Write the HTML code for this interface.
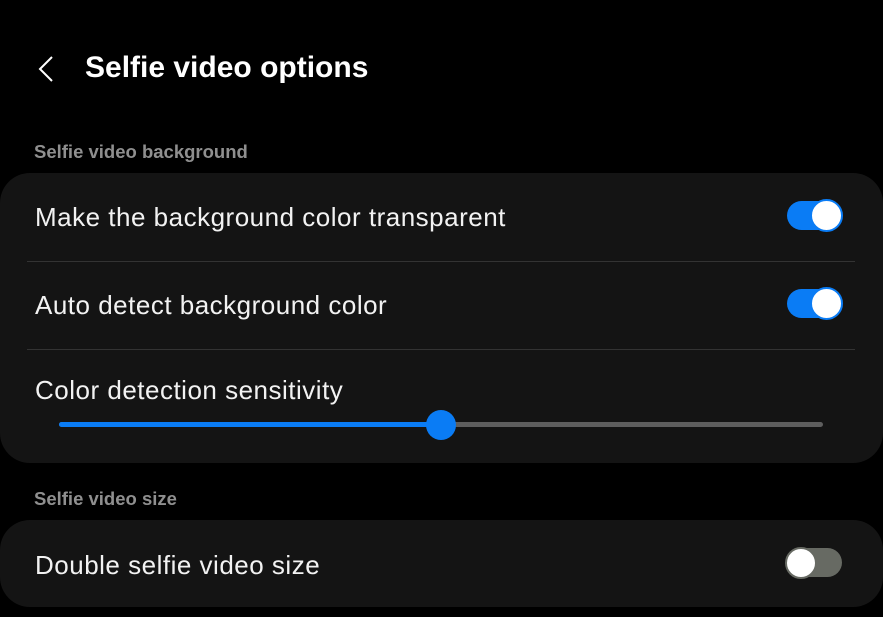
<!DOCTYPE html>
<html><head><style>
body{margin:0;width:883px;height:617px;background:#000;overflow:hidden;font-family:"Liberation Sans",sans-serif;position:relative}
.a{position:absolute;white-space:nowrap}
.card{position:absolute;left:0;width:883px;background:#141414;border-radius:30px}
.t{color:#f2f2f2;font-size:26px;letter-spacing:0.5px}
.h{color:#8f8f8f;font-size:18.5px;font-weight:bold}
.div{position:absolute;left:27px;width:828px;height:1px;background:#333}
.tog{position:absolute;width:54px;height:29px;border-radius:15px;background:#0a7cf5}
.tog .k{position:absolute;right:-2px;top:-2px;width:29px;height:29px;border-radius:50%;background:#fff;border:2px solid #0a7cf5}
</style></head><body>
<svg class="a" style="left:36px;top:55px" width="20" height="28"><path d="M16 2 L4 14 L16 26" stroke="#fff" stroke-width="2" fill="none"/></svg>
<div class="a" style="left:85px;top:51px;font-size:30px;font-weight:bold;color:#fff">Selfie video options</div>
<div class="a h" style="left:34px;top:141px">Selfie video background</div>
<div class="card" style="top:173px;height:290px"></div>
<div class="a t" style="left:35px;top:202px">Make the background color transparent</div>
<div class="tog" style="left:787px;top:201px"><div class="k"></div></div>
<div class="div" style="top:261px"></div>
<div class="a t" style="left:35px;top:290px">Auto detect background color</div>
<div class="tog" style="left:787px;top:289px"><div class="k"></div></div>
<div class="div" style="top:349px"></div>
<div class="a t" style="left:35px;top:375px">Color detection sensitivity</div>
<div class="a" style="left:59px;top:422px;width:764px;height:5px;border-radius:3px;background:#5e5e5e"></div>
<div class="a" style="left:59px;top:422px;width:382px;height:5px;border-radius:3px;background:#0a7cf5"></div>
<div class="a" style="left:426px;top:410px;width:30px;height:30px;border-radius:50%;background:#0a7cf5"></div>
<div class="a h" style="left:34px;top:488px">Selfie video size</div>
<div class="card" style="top:520px;height:87px"></div>
<div class="a t" style="left:35px;top:550px">Double selfie video size</div>
<div class="a" style="left:787px;top:548px;width:55px;height:29px;border-radius:15px;background:#676a63"></div>
<div class="a" style="left:785px;top:547px;width:28px;height:28px;border-radius:50%;background:#fff;border:2px solid #676a63"></div>
</body></html>
